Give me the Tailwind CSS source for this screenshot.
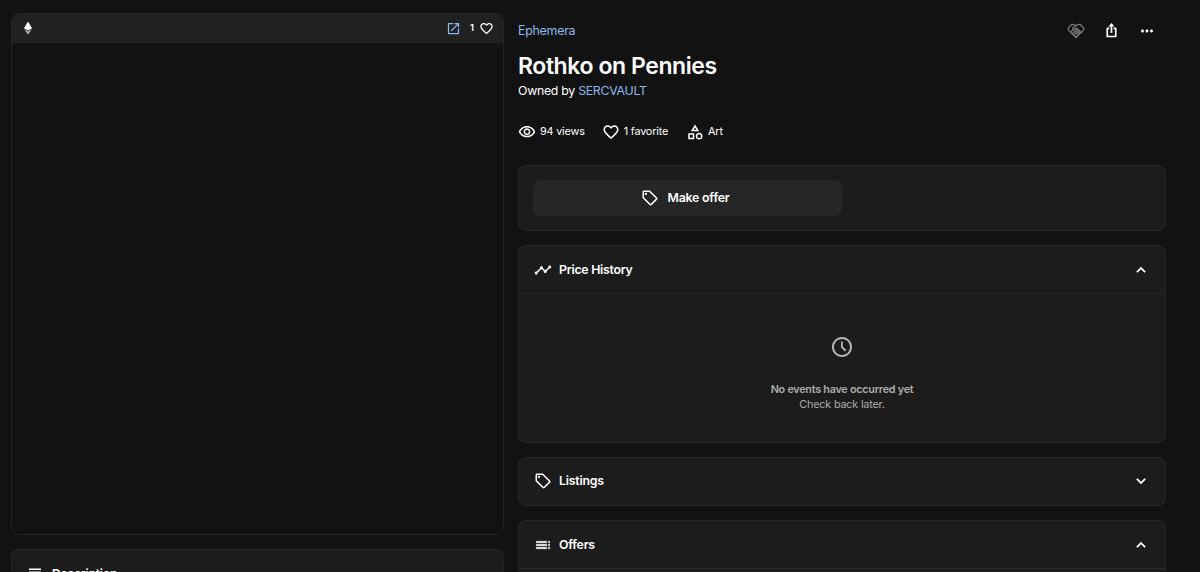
<!DOCTYPE html>
<html lang="en">
<head>
  <meta charset="UTF-8" />
  <meta name="viewport" content="width=device-width, initial-scale=1.0"/>
  <title>Rothko on Pennies</title>
  <script src="https://cdn.jsdelivr.net/npm/@tailwindcss/browser@4"></script>
</head>
<body class="bg-[#121212] text-white font-['Inter',sans-serif] h-screen overflow-hidden">

  <!-- Shared icons -->
  <svg class="hidden">
    <symbol id="heart" viewBox="0 0 24 24"><path d="M16.5 3c-1.74 0-3.41.81-4.5 2.09C10.91 3.81 9.24 3 7.5 3 4.42 3 2 5.42 2 8.5c0 3.78 3.4 6.86 8.55 11.54L12 21.35l1.45-1.32C18.6 15.36 22 12.28 22 8.5 22 5.42 19.58 3 16.5 3zm-4.4 15.55l-.1.1-.1-.1C7.14 14.24 4 11.39 4 8.5 4 6.5 5.5 5 7.5 5c1.54 0 3.04.99 3.57 2.36h1.87C13.46 5.99 14.96 5 16.5 5c2 0 3.5 1.5 3.5 3.5 0 2.89-3.14 5.74-7.9 10.05z"/></symbol>
    <symbol id="tag" viewBox="0 0 24 24"><path d="M21.41 11.41l-8.83-8.83c-.37-.37-.88-.58-1.41-.58H4c-1.1 0-2 .9-2 2v7.17c0 .53.21 1.04.59 1.41l8.83 8.83c.78.78 2.05.78 2.83 0l7.17-7.17c.78-.78.78-2.04-.01-2.83zM12.83 20L4 11.17V4h7.17L20 12.83 12.83 20z"/><circle cx="6.5" cy="6.5" r="1.5"/></symbol>
    <symbol id="up" viewBox="0 0 24 24"><path d="M12 8l-6 6 1.41 1.41L12 10.83l4.59 4.58L18 14z" stroke="#fff" stroke-width=".6"/></symbol>
    <symbol id="down" viewBox="0 0 24 24"><path d="M16.59 8.59L12 13.17 7.41 8.59 6 10l6 6 6-6z" stroke="#fff" stroke-width=".6"/></symbol>
  </svg>

  <div class="flex gap-[14px] pl-[11px] pr-[34px] pt-[13px]">

    <!-- Media -->
    <div class="w-[493px] shrink-0">
      <div class="h-[522px] rounded-lg border border-[#242424] overflow-hidden">
        <div class="h-[29px] bg-[#212121] flex items-center pl-[11px] pr-[9px] pb-px">
          <svg class="w-[10px] h-[14px]" viewBox="0 0 10 14"><path fill="#fff" d="M5 .5L9 7.2 5 9.6 1 7.2z"/><path fill="#b8b8b8" d="M1 8l4 2.4L9 8l-4 5.5z"/></svg>
          <svg class="w-[15px] h-[15px] ml-auto fill-[#8ab9ee]" viewBox="0 0 24 24"><path d="M19 19H5V5h7V3H5c-1.11 0-2 .9-2 2v14c0 1.1.89 2 2 2h14c1.1 0 2-.9 2-2v-7h-2v7zM14 3v2h3.59l-9.83 9.83 1.41 1.41L19 6.41V10h2V3h-7z"/></svg>
          <span class="ml-[9px] text-[9.5px] font-semibold">1</span>
          <svg class="w-[15px] h-[15px] ml-[5px] fill-white"><use href="#heart"/></svg>
        </div>
      </div>
      <div class="mt-[14px] h-[23px] rounded-t-lg border border-b-0 border-[#262626] bg-[#1c1c1c] flex items-start pl-[14px] pt-[15px] gap-[8px] overflow-hidden">
        <svg class="w-[18px] h-[18px] shrink-0 fill-white" viewBox="0 0 24 24"><path d="M4 4.5h16v2.2H4zM4 8.5h16v2.2H4zM4 12.5h16v2.2H4zM4 16.5h10v2.2H4z"/></svg>
        <span class="pt-px text-[12.2px] leading-[16px] tracking-[-0.25px] font-semibold">Description</span>
      </div>
    </div>

    <!-- Details -->
    <div class="flex-1 min-w-0">
      <div class="flex items-center h-[35px]">
        <a class="pt-px text-[12.4px] tracking-[-0.25px] text-[#8ab9ee]">Ephemera</a>
        <svg class="ml-auto w-[18px] h-[18px] text-[#777777]" viewBox="0 0 24 24" fill="none" stroke="currentColor" stroke-width="1.8" stroke-linejoin="round" stroke-linecap="round"><path d="M12 4.8L9.5 3.4Q7.5 2.6 5.5 3.9L2.2 7.5Q1 9.5 2.5 11.5L12 20.8l9.5-9.3q1.5-2 .3-4L18.5 3.9q-2-1.3-4-.5L7.6 8.2q-.5 2.2 1.8 2.2l3.6-2.2 6.2 6"/><path d="M5 13.3l3-2.8M7.2 15.6l3.2-3M9.5 17.8l3.2-3M12 20l3-2.8M12.8 10.6l4.4 4.2M11 12l4 4"/></svg>
        <svg class="ml-[18px] w-[17px] h-[17px]" viewBox="0 0 24 24" fill="none" stroke="#fff" stroke-width="2.4" stroke-linejoin="round"><path d="M9 9H6v11.5h12V9h-3M12 15.5V4"/><path d="M12 1.5L7.8 6.3h8.4z" fill="#fff" stroke="none"/></svg>
        <svg class="ml-[18px] mr-[10px] w-[18px] h-[18px] fill-white" viewBox="0 0 24 24"><path d="M6 10c-1.1 0-2 .9-2 2s.9 2 2 2 2-.9 2-2-.9-2-2-2zm12 0c-1.1 0-2 .9-2 2s.9 2 2 2 2-.9 2-2-.9-2-2-2zm-6 0c-1.1 0-2 .9-2 2s.9 2 2 2 2-.9 2-2-.9-2-2-2z"/></svg>
      </div>
      <h1 class="mt-1 text-[23px] leading-[28px] tracking-[-0.42px] font-semibold">Rothko on Pennies</h1>
      <div class="mt-[2px] text-[12.3px] leading-[18px] tracking-[-0.27px]">Owned by <a class="text-[#8ab9ee]">SERCVAULT</a></div>

      <div class="mt-[23px] h-[18px] flex items-center text-[10.8px] tracking-[-0.17px]">
        <svg class="w-[18px] h-[18px] mr-1 fill-white" viewBox="0 0 24 24"><path d="M12 6c3.79 0 7.17 2.13 8.82 5.5C19.17 14.87 15.79 17 12 17s-7.17-2.13-8.82-5.5C4.83 8.13 8.21 6 12 6m0-2C7 4 2.73 7.11 1 11.5 2.73 15.89 7 19 12 19s9.27-3.11 11-7.5C21.27 7.11 17 4 12 4zm0 5c1.38 0 2.5 1.12 2.5 2.5S13.38 14 12 14s-2.5-1.12-2.5-2.5S10.62 9 12 9m0-2c-2.48 0-4.5 2.02-4.5 4.5S9.52 16 12 16s4.5-2.02 4.5-4.5S14.48 7 12 7z"/></svg>
        <span class="pt-px">94 views</span>
        <svg class="w-[18px] h-[18px] ml-[17px] mr-1 fill-white"><use href="#heart"/></svg>
        <span class="pt-px">1 favorite</span>
        <svg class="w-[18px] h-[18px] ml-[18px] mr-1 fill-white" viewBox="0 0 24 24"><path d="M12 2l-5.5 9h11L12 2zm0 3.84L13.93 9h-3.87L12 5.84zM17.5 13c-2.49 0-4.5 2.01-4.5 4.5s2.01 4.5 4.5 4.5 4.5-2.01 4.5-4.5-2.01-4.5-4.5-4.5zm0 7a2.5 2.5 0 0 1 0-5 2.5 2.5 0 0 1 0 5zM3 21.5h8v-8H3v8zm2-6h4v4H5v-4z"/></svg>
        <span class="pt-px">Art</span>
      </div>

      <!-- Make offer -->
      <div class="mt-6 h-[66px] rounded-lg border border-[#282828] bg-[#1c1c1c] p-[14px]">
        <button class="w-[309px] h-[36px] rounded-lg bg-[#262626] flex items-center justify-center gap-[9px] pr-[5px] text-[12.3px] tracking-[-0.2px] font-semibold">
          <svg class="w-[18px] h-[18px] fill-white"><use href="#tag"/></svg>
          Make offer
        </button>
      </div>

      <!-- Price history -->
      <div class="mt-[14px] h-[198px] rounded-lg border border-[#282828] bg-[#1c1c1c]">
        <div class="h-12 border-b border-[#282828] flex items-center px-[15px] text-[12.3px] tracking-[-0.25px] font-semibold">
          <svg class="w-[18px] h-[18px] mr-[7px] fill-white" viewBox="0 0 24 24"><path d="M23 8c0 1.1-.9 2-2 2-.18 0-.35-.02-.51-.07l-3.56 3.55c.05.16.07.34.07.52 0 1.1-.9 2-2 2s-2-.9-2-2c0-.18.02-.36.07-.52l-2.55-2.55c-.16.05-.34.07-.52.07s-.36-.02-.52-.07l-4.55 4.56c.05.16.07.33.07.51 0 1.1-.9 2-2 2s-2-.9-2-2 .9-2 2-2c.18 0 .35.02.51.07l4.56-4.55C8.02 9.36 8 9.18 8 9c0-1.1.9-2 2-2s2 .9 2 2c0 .18-.02.36-.07.52l2.55 2.55c.16-.05.34-.07.52-.07s.36.02.52.07l3.55-3.56C19.02 8.35 19 8.18 19 8c0-1.1.9-2 2-2s2 .9 2 2z"/></svg>
          <span class="pt-px">Price History</span>
          <svg class="w-[18px] h-[18px] ml-auto fill-white"><use href="#up"/></svg>
        </div>
        <div class="pt-[41px] flex flex-col items-center text-[10.8px] leading-[15px] text-[#acacac]">
          <svg class="w-6 h-6 fill-[#b5b5b5]" viewBox="0 0 24 24"><path d="M11.99 2C6.47 2 2 6.48 2 12s4.47 10 9.99 10C17.52 22 22 17.52 22 12S17.52 2 11.99 2zM12 20c-4.42 0-8-3.58-8-8s3.58-8 8-8 8 3.58 8 8-3.58 8-8 8z"/><path d="M11 6.5h1.8v5.1l3.5 3.5-1.3 1.3-4-4z"/></svg>
          <div class="mt-[23px] font-semibold tracking-[-0.25px]">No events have occurred yet</div>
          <div class="tracking-[-0.18px]">Check back later.</div>
        </div>
      </div>

      <!-- Listings -->
      <div class="mt-[14px] h-[49px] rounded-lg border border-[#282828] bg-[#1c1c1c] flex items-center px-[15px] pb-px text-[12.3px] tracking-[-0.2px] font-semibold">
        <svg class="w-[18px] h-[18px] mr-[7px] fill-white"><use href="#tag"/></svg>
        <span class="pt-px">Listings</span>
        <svg class="w-[18px] h-[18px] ml-auto fill-white"><use href="#down"/></svg>
      </div>

      <!-- Offers -->
      <div class="mt-[14px] h-[52px] rounded-t-lg border border-b-0 border-[#282828] bg-[#1c1c1c]">
        <div class="h-12 border-b border-[#282828] flex items-center px-[15px] text-[12.3px] tracking-[-0.2px] font-semibold">
          <svg class="w-[18px] h-[18px] mr-[7px] fill-white" viewBox="0 0 24 24"><path d="M3 9h14V7H3v2zm0 4h14v-2H3v2zm0 4h14v-2H3v2zm16 0h2v-2h-2v2zm0-10v2h2V7h-2zm0 6h2v-2h-2v2z" stroke="#fff" stroke-width=".5"/></svg>
          <span class="pt-px">Offers</span>
          <svg class="w-[18px] h-[18px] ml-auto fill-white"><use href="#up"/></svg>
        </div>
      </div>
    </div>
  </div>

</body>
</html>
